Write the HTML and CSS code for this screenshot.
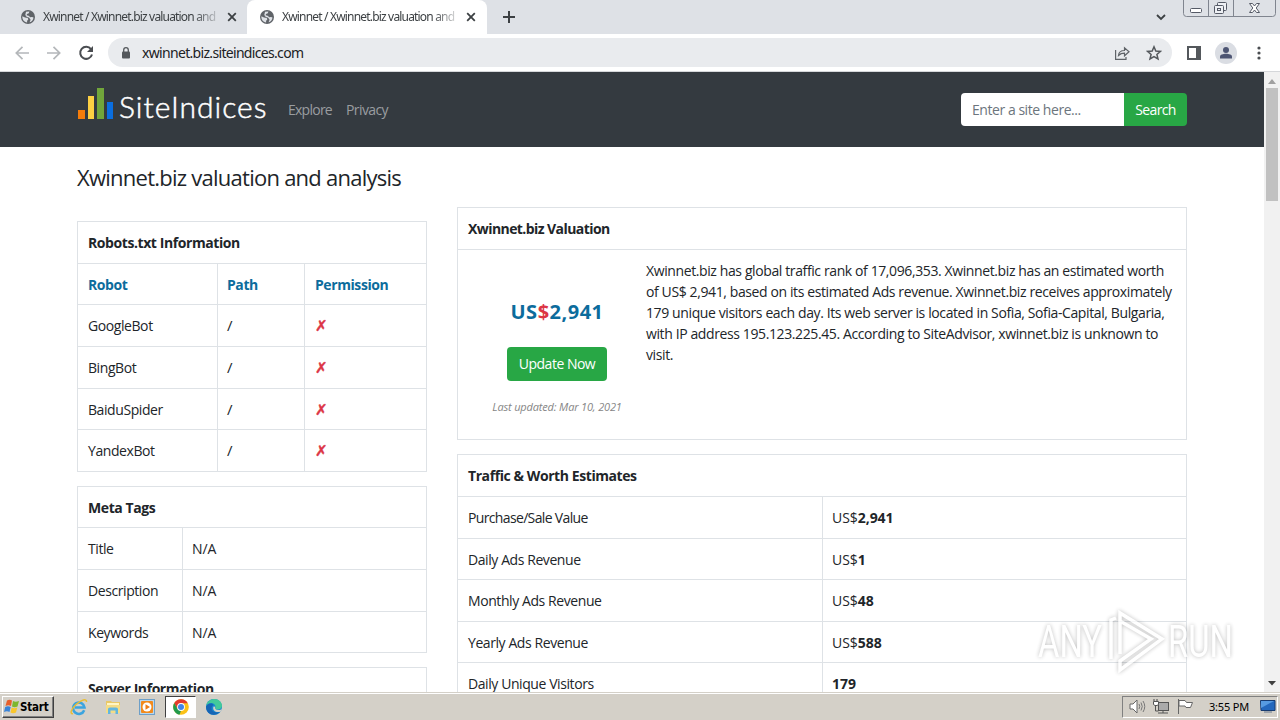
FILE: index.html
```html
<!DOCTYPE html>
<html lang="en">
<head>
<meta charset="utf-8">
<title>Xwinnet / Xwinnet.biz valuation and analysis</title>
<link rel="stylesheet" href="styles.css">
</head>
<body>
<svg width="0" height="0" class="defs">
  <symbol id="globe" viewBox="0 0 14 14"><circle cx="7" cy="7" r="7" fill="#5f6368"/><path d="M1.4 6.2 4 7.6l2.8.3.5 1.7-1.2 1.2v1.6C3.2 12.200 1 9.500 1.400 6.200zM5 1.800 8.400 1.500 7.800 3.200 6 3.900 5.600 5.200 7.600 5.700 9.300 7.300 11 7 12.500 7.500C12.300 10 10.600 11.900 8.600 12.300L9.600 9.800 8 7.400 5.800 6.900 4.300 5z" fill="#dee1e6"/></symbol>
</svg>
<header class="tabs">
  <div class="tab">
    <svg class="fav" width="14" height="14"><use href="#globe"/></svg>
    <span class="tab-title">Xwinnet / Xwinnet.biz valuation and</span>
    <svg class="close" width="10" height="10" viewBox="0 0 10 10"><path d="M1.200 1.200l7.600 7.600M8.800 1.200l-7.600 7.600"/></svg>
  </div>
  <div class="tab active">
    <svg class="fav" width="14" height="14"><use href="#globe"/></svg>
    <span class="tab-title">Xwinnet / Xwinnet.biz valuation and</span>
    <svg class="close" width="10" height="10" viewBox="0 0 10 10"><path d="M1.200 1.200l7.600 7.600M8.800 1.200l-7.600 7.600"/></svg>
  </div>
  <svg class="plus" width="12" height="12" viewBox="0 0 12 12"><path d="M6 0v12M0 6h12" stroke="#3c4043" stroke-width="2"/></svg>
  <svg class="chev" width="10" height="7" viewBox="0 0 10 7"><path d="M1 1l4 4 4-4" fill="none" stroke="#3c4043" stroke-width="1.800"/></svg>
  <svg class="winctl" width="94" height="18" viewBox="0 0 94 18">
    <path d="M.5 0v13.500q0 3 3 3h86q3 0 3-3V0M25.500 0v16M50.500 0v16" fill="none" stroke="#80858f"/>
    <rect x="7.500" y="8.500" width="11" height="4" rx="1" fill="#fff" stroke="#555a66"/>
    <g fill="#eef0f4" stroke="#555a66"><rect x="34.500" y="2.500" width="9" height="8" rx="1"/><rect x="31.500" y="5.500" width="9" height="8" rx="1"/><rect x="34.500" y="8.500" width="3" height="2"/></g>
    <path d="M66.500 3.500h3l2 2.500 2-2.500h3l-3.300 4.500 3.300 4.500h-3l-2-2.500-2 2.500h-3l3.300-4.500z" fill="#fff" stroke="#555a66"/>
  </svg>
</header>
<nav class="toolbar">
  <svg class="navbtns" width="82" height="16" viewBox="0 0 82 16" fill="none">
    <g stroke="#b4b7ba" stroke-width="1.700"><path d="M14 8H1.500M7.500 1.800L1.300 8l6.200 6.200M32 8h12.500M38.500 1.800L44.700 8l-6.200 6.200"/></g>
    <path d="M76 4.200A6 6 0 1 0 77 9.500" stroke="#4a4d51" stroke-width="2"/><path d="M78 1v6h-6z" fill="#4a4d51"/>
  </svg>
  <div class="omnibox">
    <svg width="10" height="12" viewBox="0 0 10 12"><rect x="1" y="4.500" width="8" height="7" rx="1" fill="#54585c"/><path d="M2.700 5V3a2.300 2.300 0 0 1 4.600 0v2" fill="none" stroke="#54585c" stroke-width="1.300"/></svg>
    <span class="url">xwinnet.biz.siteindices.com</span>
    <svg class="share" width="16" height="14" viewBox="0 0 16 14" fill="none" stroke="#5f6368" stroke-width="1.200"><path d="M1.600 4v9.400h10.400V11M4.500 9.500c.3-3.500 2.600-5 6-5V1.800l4.500 4-4.500 4V7.200C8 7.200 6 8 4.500 9.500z"/></svg>
    <svg width="16" height="16" viewBox="0 0 16 16" fill="none" stroke="#54585c" stroke-width="1.500"><path d="M8 1.800l1.800 4.200 4.600.4-3.500 3 1.100 4.500L8 11.500l-4 2.400 1.100-4.500-3.500-3L6.200 6z"/></svg>
  </div>
  <svg class="panel" width="14" height="14" viewBox="0 0 14 14"><rect x="1" y="1" width="12" height="12" fill="none" stroke="#54585c" stroke-width="2"/><path d="M9 0h5v14H9z" fill="#54585c"/></svg>
  <svg class="avatar" width="22" height="22" viewBox="0 0 22 22"><circle cx="11" cy="11" r="11" fill="#dadde3"/><circle cx="11" cy="8" r="3" fill="#4d5573"/><path d="M5 16.500v-1.800c0-2 3-2.900 6-2.900s6 .9 6 2.900v1.800z" fill="#4d5573"/></svg>
  <svg class="dots" width="4" height="14" viewBox="0 0 4 14" fill="#4a4d51"><circle cx="2" cy="2" r="1.600"/><circle cx="2" cy="7" r="1.600"/><circle cx="2" cy="12" r="1.600"/></svg>
</nav>

<div class="viewport">
  <div class="page">
    <div class="navbar">
      <svg class="logo-mark" width="36" height="32" viewBox="0 0 36 32"><path d="M0 22h7v9H0z" fill="#f57c0a"/><path d="M10 8h6v23h-6z" fill="#fdd043"/><path d="M19 0h7v31h-7z" fill="#71a53b"/><path d="M29 14h6v17h-6z" fill="#0a6ee0"/></svg>
      <span class="logo-text">SiteIndices</span>
      <span class="link explore">Explore</span>
      <span class="link">Privacy</span>
      <div class="search"><div class="field">Enter a site here...</div><div class="search-btn">Search</div></div>
    </div>
    <h1>Xwinnet.biz valuation and analysis</h1>
    <div class="columns">
      <aside>
        <section class="card robots">
          <div class="row head">Robots.txt Information</div>
          <div class="row cols blue"><b>Robot</b><b>Path</b><b>Permission</b></div>
          <div class="row cols"><span>GoogleBot</span><span class="slash">/</span><span class="no">✗</span></div>
          <div class="row cols"><span>BingBot</span><span class="slash">/</span><span class="no">✗</span></div>
          <div class="row cols"><span>BaiduSpider</span><span class="slash">/</span><span class="no">✗</span></div>
          <div class="row cols"><span>YandexBot</span><span class="slash">/</span><span class="no">✗</span></div>
        </section>
        <section class="card meta">
          <div class="row head">Meta Tags</div>
          <div class="row cols"><span>Title</span><span class="plain">N/A</span></div>
          <div class="row cols"><span>Description</span><span class="plain">N/A</span></div>
          <div class="row cols"><span>Keywords</span><span class="plain">N/A</span></div>
        </section>
        <section class="card"><div class="row head">Server Information</div></section>
      </aside>
      <main>
        <section class="card valuation">
          <div class="row head">Xwinnet.biz Valuation</div>
          <div class="body">
            <div class="worth">
              <div class="price">US<i>$</i>2,941</div>
              <div class="update">Update Now</div>
              <div class="updated">Last updated: Mar 10, 2021</div>
            </div>
            <p>Xwinnet.biz has global traffic rank of 17,096,353. Xwinnet.biz has an estimated worth<br>of US$ 2,941, based on its estimated Ads revenue. Xwinnet.biz receives approximately<br>179 unique visitors each day. Its web server is located in Sofia, Sofia-Capital, Bulgaria,<br>with IP address 195.123.225.45. According to SiteAdvisor, xwinnet.biz is unknown to<br>visit.</p>
          </div>
        </section>
        <section class="card traffic">
          <div class="row head">Traffic &amp; Worth Estimates</div>
          <div class="row cols"><span class="tight">Purchase/Sale Value</span><span class="plain">US$<b>2,941</b></span></div>
          <div class="row cols"><span>Daily Ads Revenue</span><span class="plain">US$<b>1</b></span></div>
          <div class="row cols"><span>Monthly Ads Revenue</span><span class="plain">US$<b>48</b></span></div>
          <div class="row cols"><span>Yearly Ads Revenue</span><span class="plain">US$<b>588</b></span></div>
          <div class="row cols"><span>Daily Unique Visitors</span><span class="plain"><b>179</b></span></div>
        </section>
      </main>
    </div>
  </div>
  <div class="scroll">
    <svg width="8" height="5" viewBox="0 0 8 5"><path d="M0 5l4-5 4 5z" fill="#a0a0a0"/></svg>
    <div class="thumb"></div>
    <svg class="down" width="8" height="5" viewBox="0 0 8 5"><path d="M0 0h8L4 4.500z" fill="#404040"/></svg>
  </div>
</div>

<footer class="taskbar">
  <div class="start">
    <svg width="16" height="15" viewBox="0 0 16 15"><path d="M3 1.500Q5.500 0 8 1.500L7 7Q4.500 5.500 1.500 7z" fill="#e8602c"/><path d="M9 2q2.500 1.500 6 0l-1.500 5.500q-3 1.500-5.500 0z" fill="#7db72f"/><path d="M1.200 8Q4 6.500 6.700 8l-1.200 5Q3 11.500 0 13z" fill="#3a84d8"/><path d="M7.700 8.500q2.700 1.500 5.600 0L12 13.500q-3 1.500-5.500 0z" fill="#f9c62b"/></svg>
    <span>Start</span>
  </div>
  <div class="apps">
    <svg width="18" height="18" viewBox="0 0 18 18" fill="none"><path d="M14.200 12.200A5.700 5.700 0 1 1 14.500 9.500H5" stroke="#3ba4df" stroke-width="2.500"/><path d="M3 15.500C-.5 16.500 1 11 6 6.500S17 0 16.500 4" stroke="#e9bd35" stroke-width="1.500"/></svg>
    <svg width="18" height="18" viewBox="0 0 18 18"><path d="M2 3h5l1 1h8v11H2z" fill="#e9c867"/><path d="M3 5h12v5H3z" fill="#fff5c4"/><path d="M2 7h14v8H2z" fill="#f4dc86"/><path d="M4 16v-5q0-1.500 2-1.500h6q2 0 2 1.500v5h-2.500v-3.500h-5V16z" fill="#62b6df"/></svg>
    <svg width="18" height="18" viewBox="0 0 18 18"><rect x="1.500" y="1.500" width="15" height="15" fill="#b9d7ee" stroke="#6d9fc8"/><rect x="3" y="3" width="12" height="12" rx="1" fill="#f28a1c"/><circle cx="9" cy="9" r="4.500" fill="#fff"/><path d="M7.500 6.300l4.500 2.700-4.500 2.700z" fill="#ed7d17"/></svg>
    <div class="current"><svg width="16" height="16" viewBox="0 0 16 16"><circle cx="8" cy="8" r="7.800" fill="#fbc116"/><path d="M8 8L4.600 10 1.200 4.100A7.800 7.800 0 0 1 14.800 4.200H8z" fill="#e33b2e"/><path d="M1.200 4.100l3.400 5.800L8 11.800 6.500 15.700A7.800 7.800 0 0 1 1.200 4.100z" fill="#229a4c"/><circle cx="8" cy="8" r="3.900" fill="#fff"/><circle cx="8" cy="8" r="3" fill="#4285e8"/></svg></div>
    <svg width="18" height="18" viewBox="0 0 18 18"><circle cx="9" cy="9" r="8" fill="#1687d0"/><path d="M1.200 8C2 3 6 1 9.500 1c4.500 0 7.500 3.500 7.500 6.500 0 3-2.500 4-4.500 4-2.500 0-2.500-1.300-2-2C11 7 8.500 5 6 5S2 6.500 1.200 8z" fill="#42c99b"/><path d="M1 8.500C3 4.500 8 5 8.500 7 5 9 6 15 12.500 14.500l2.500-.7C11 18.500 1 18 1 8.500z" fill="#1665b5"/><path d="M10.300 8.800c-.8 1.500.2 3.200 3.200 3.200 1.700 0 2.700-.6 3.500-1.300l-1.500 3C11 15 7 12.500 8.500 8.500z" fill="#d4d0c8"/></svg>
  </div>
  <div class="tray">
    <svg width="17" height="15" viewBox="0 0 17 15"><path d="M1 5h3l4-4v13l-4-4H1z" fill="#fff" stroke="#666"/><path d="M10 5q1.500 2.500 0 5M12 3.500q2.500 4 0 8M14 2q3.500 5.500 0 11" fill="none" stroke="#777"/></svg>
    <svg width="17" height="15" viewBox="0 0 17 15"><rect x="5.500" y="3.500" width="10" height="8" fill="#aaa" stroke="#555"/><path d="M5 14h10M10 11v3M2.500 5v7h3" stroke="#555" fill="none"/><path d="M1 0v2M4 0v2" stroke="#444"/><path d="M.5 2.500h5v3l-1.500 1h-2l-1.500-1z" fill="#fff" stroke="#555"/></svg>
    <svg width="17" height="15" viewBox="0 0 17 15"><path d="M1.500 0v15M2 1.500h6l1.500 2h6l-2 5H9l-1-1.500H2z" fill="#fff" stroke="#666"/></svg>
    <span class="clock">3:55 PM</span>
    <svg width="16" height="13" viewBox="0 0 16 13"><path d="M.5.5h14.500v10H1z" fill="#2468bd" stroke="#173b70"/><path d="M1 1h13L1 8z" fill="#579be1"/><path d="M4 12h8" stroke="#69798e"/></svg>
  </div>
</footer>
<svg class="watermark" width="206" height="72" viewBox="0 0 206 72">
  <g class="wm-text"><text x="2" y="51" textLength="64" lengthAdjust="spacingAndGlyphs">ANY</text><text x="132" y="51" textLength="65" lengthAdjust="spacingAndGlyphs">RUN</text></g>
  <g fill="none" stroke="#fff" stroke-width="3.500"><path d="M75 53V14l5-2M84 48V7l42 26-42 31v-9l31-22-31-18"/></g>
</svg>
</body>
</html>
```
FILE: styles.css
```css
* { box-sizing: border-box; }
body { margin: 0; width: 1280px; height: 720px; overflow: hidden; display: flex; flex-direction: column; font: 14px/21px "Open Sans", "Noto Sans", sans-serif; letter-spacing: -.42px; color: #212529; background: #fff; white-space: nowrap; }
svg { display: block; flex: none; }
.defs { position: absolute; }

.tabs { height: 34px; flex: none; background: #dee1e6; display: flex; align-items: flex-start; font: 12px/34px "Noto Sans", sans-serif; color: #3c4043; }
.tab { width: 247px; height: 34px; padding: 0 10px 0 21px; display: flex; align-items: center; }
.tab.active { width: 240px; padding: 0 11px 0 13px; background: #fff; border-radius: 8px 8px 0 0; }
.tab-title { width: 175px; margin-left: 8px; letter-spacing: -.82px; -webkit-mask-image: linear-gradient(90deg, #000 150px, transparent 180px); }
.close { margin-left: auto; stroke: #3c4043; stroke-width: 1.8; }
.plus { margin: 11px 0 0 16px; }
.chev { margin: 14px 0 0 auto; }
.winctl { margin-left: 17px; margin-right: 3px; }

.toolbar { height: 38px; flex: none; display: flex; align-items: center; border-bottom: 1px solid #d5d7da; background: #fff; }
.navbtns { margin: 0 11px 0 15px; }
.omnibox { width: 1064px; height: 29px; border-radius: 15px; background: #e9ebee; display: flex; align-items: center; padding: 0 10px 0 13px; }
.url { margin-left: 11px; font: 14px/28px "Noto Sans", sans-serif; letter-spacing: -.68px; color: #202124; }
.share { margin: 0 16px 0 auto; }
.panel { margin-left: 15px; }
.avatar { margin-left: 14px; }
.dots { margin-left: 20px; }

.viewport { height: 620px; flex: none; display: flex; }
.page { width: 1264px; height: 620px; overflow: hidden; }
.navbar { height: 75px; background: #343a40; display: flex; align-items: flex-start; padding: 0 77px 0 78px; }
.logo-mark { margin-top: 16px; }
.logo-text { width: 169px; margin: 15px 0 0 5px; font: 300 30px/38px Lato, sans-serif; color: #fff; letter-spacing: 1px; -webkit-text-stroke: .5px #fff; }
.link { margin-top: 27px; color: #9a9da0; letter-spacing: -.6px; }
.explore { width: 58px; letter-spacing: -.75px; }
.search { display: flex; margin: 21px 0 0 auto; width: 226px; height: 33px; border-radius: 4px; overflow: hidden; line-height: 34px; letter-spacing: -.45px; }
.field { width: 163px; background: #fff; padding-left: 11px; color: #6c757d; }
.search-btn { flex: 1; background: #28a745; color: #fff; text-align: center; letter-spacing: -.65px; }
h1 { margin: 0; height: 60px; padding-left: 77px; font-size: 22px; line-height: 60px; font-weight: 400; letter-spacing: -.75px; }

.columns { display: flex; padding-left: 77px; gap: 30px; }
aside { width: 350px; padding-top: 14px; }
main { width: 730px; }
.card { border: 1px solid #dee2e6; border-top: 0; margin-bottom: 13.7px; }
.row { height: 41.65px; border-top: 1px solid #dee2e6; line-height: 41px; }
.head { font-weight: 700; padding-left: 10px; letter-spacing: -.42px; }
.cols { display: grid; }
.cols > * { height: 40.6px; padding-left: 9px; border-left: 1px solid #dee2e6; }
.cols > :first-child { padding-left: 10px; border-left: 0; }
.robots { margin-bottom: 13.9px; }
.robots .cols { grid-template-columns: 139px 87px 1fr; }
.robots .cols > :last-child { padding-left: 10px; }
.meta .row, .traffic .row { height: 41.6px; }
.meta .cols { grid-template-columns: 104px 1fr; }
.traffic .cols { grid-template-columns: 364px 1fr; }
.plain { letter-spacing: -.05px; }
.tight { letter-spacing: -.65px; }
.slash { font-size: 15px; }
.blue { color: #0c6c9c; }
.no { color: #dc3545; font: bold 15px/43px "DejaVu Sans", sans-serif; -webkit-text-stroke: .4px #dc3545; }
.valuation { margin-bottom: 14.05px; }
.valuation .head { letter-spacing: -.57px; }
.body { height: 190.7px; border-top: 1px solid #dee2e6; display: flex; }
.worth { width: 188px; flex: none; padding: 45px 0 0 10px; display: flex; flex-direction: column; align-items: center; }
.price { font-size: 20px; line-height: 34px; font-weight: 700; color: #0c6c9c; letter-spacing: .5px; }
.price i { color: #dc3545; font-style: normal; }
.update { width: 100px; height: 34px; margin-top: 18px; border-radius: 4px; background: #28a745; color: #fff; line-height: 34px; text-align: center; letter-spacing: -.5px; }
.updated { margin-top: 16px; font-size: 11px; line-height: 20px; font-style: italic; color: #868686; letter-spacing: -.16px; }
p { margin: 10px 0 0; letter-spacing: -.39px; }

.scroll { width: 16px; background: #f1f1f1; display: flex; flex-direction: column; align-items: center; padding: 7px 0 6px; }
.thumb { width: 12px; height: 113px; margin-top: 4px; background: #c1c1c1; }
.down { margin-top: auto; }

.taskbar { height: 28px; flex: none; background: #d4d0c8; border-top: 1px solid #d4d0c8; box-shadow: inset 0 1px #fff; display: flex; align-items: center; padding: 0 2px 0; color: #000; }
.start { width: 52px; height: 22px; border: 1px solid; border-color: #fff #404040 #404040 #fff; box-shadow: inset -1px -1px #808080; display: flex; align-items: center; padding-left: 1px; font: bold 11.5px/20px "DejaVu Sans Condensed", "DejaVu Sans", sans-serif; letter-spacing: -.2px; }
.apps { display: flex; align-items: center; margin-left: 16px; gap: 16px; }
.current { width: 31px; height: 22px; background: #fff; border: 1px solid; border-color: #404040 #fff #fff #404040; display: flex; align-items: center; justify-content: center; margin: 0 -7px; }
.tray { margin-left: auto; width: 156px; height: 22px; border: 1px solid; border-color: #808080 #fff #fff #808080; display: flex; align-items: center; gap: 7px; padding-left: 6px; }
.clock { width: 44px; margin: 0 0 0 8px; font: 11px/20px "Noto Sans", sans-serif; letter-spacing: -.2px; }
.watermark { position: absolute; left: 1036px; top: 606px; filter: drop-shadow(0 0 2px rgba(0,0,0,.35)); opacity: .75; }
.wm-text { font: 44px Roboto, sans-serif; letter-spacing: 0; fill: #fff; }
```
